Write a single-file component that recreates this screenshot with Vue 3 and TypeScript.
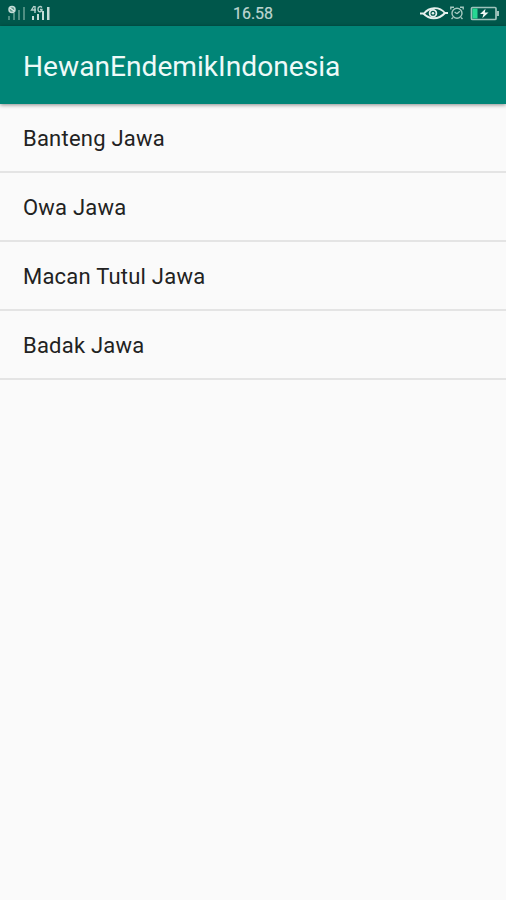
<script setup lang="ts">
const title: string = 'HewanEndemikIndonesia'
const animals: string[] = ['Banteng Jawa', 'Owa Jawa', 'Macan Tutul Jawa', 'Badak Jawa']
</script>

<template>
  <div class="screen">
    <div class="status">
      <svg class="signals" width="44" height="16" viewBox="0 0 44 16">
        <g fill="#4f8f82">
          <rect x="0" y="11" width="2" height="4" />
          <rect x="5" y="8" width="2" height="7" />
          <rect x="10" y="5" width="2" height="10" />
          <rect x="15" y="2" width="2" height="13" />
        </g>
        <circle cx="4" cy="4.5" r="3" fill="#5c988c" stroke="#c5dcd7" stroke-width="1.5" />
        <path d="M2 3 L6 6" stroke="#e3efec" stroke-width="1.2" />
        <g fill="#c5dcd7">
          <rect x="24" y="11" width="2" height="4" />
          <rect x="29" y="9" width="2" height="6" />
          <rect x="34" y="6" width="2" height="9" />
          <rect x="39" y="2" width="2.5" height="13" />
        </g>
        <path d="M26 1 L23.5 5 H28 M27 1 V8 M34 2.5 C32 .5 29.8 2 30 4.5 C30 8 34 7 34 4.5 H32" fill="none" stroke="#b4d1cb" stroke-width="1.4" />
      </svg>
      <span class="clock">16.58</span>
      <svg class="indicators" width="80" height="18" viewBox="0 0 80 18">
        <path d="M0 9.5 H4 C9 3 19 2 25 9 H28" fill="none" stroke="#e5f0ed" stroke-width="1.9" />
        <path d="M3.5 9.5 C9 15.5 18 16.5 25 9" fill="none" stroke="#e5f0ed" stroke-width="2" />
        <circle cx="13" cy="9.3" r="3.4" fill="none" stroke="#e5f0ed" stroke-width="1.7" />
        <circle cx="13" cy="9.3" r="1.3" fill="#e5f0ed" />
        <g fill="none" stroke="#a5c9c1" stroke-width="1.4">
          <circle cx="37" cy="9.3" r="5" />
          <path d="M30.8 5.5 V3.2 H34 M40 3.2 H43.2 V5.5 M33 13.5 L31.5 15 M41 13.5 L42.5 15 M37 9.7 L39.8 7.2 M37 9.7 L34.6 8" />
        </g>
        <rect x="51.5" y="3.5" width="24.5" height="12" rx="1" fill="none" stroke="#9fc3bc" stroke-width="1.7" />
        <rect x="76.5" y="7" width="2.5" height="5" fill="#9fc3bc" />
        <rect x="52.5" y="4.5" width="5" height="10" fill="#26d792" />
        <path d="M65.5 4.7 L60 10 H63.5 L62.3 14.2 L68.5 8.5 H64.8 Z" fill="#f0f7f5" />
      </svg>
    </div>
    <header class="appbar"><h1>{{ title }}</h1></header>
    <ul class="list">
      <li v-for="animal in animals" :key="animal"><span>{{ animal }}</span></li>
    </ul>
  </div>
</template>

<style>
body {
  margin: 0;
}
</style>

<style scoped>
.screen {
  height: 900px;
  background: #fafafa;
  font-family: Roboto, "Liberation Sans", sans-serif;
  overflow: hidden;
}
.status {
  height: 26px;
  box-sizing: border-box;
  padding: 0 6px 0 8px;
  display: grid;
  grid-template-columns: 1fr auto 1fr;
  align-items: center;
  background: #00574b;
}
.clock {
  font-size: 16px;
  line-height: 24px;
  padding-top: 2px;
  margin-right: 2px;
  color: #bdd5d0;
  -webkit-text-stroke: 0.2px #bdd5d0;
}
.indicators {
  justify-self: end;
}
.appbar {
  position: relative;
  height: 78px;
  display: flex;
  align-items: center;
  padding: 4px 23px 0;
  box-sizing: border-box;
  background: #008577;
  box-shadow: 0 1px 4px rgba(0, 0, 0, 0.45);
}
h1 {
  margin: 0;
  font-size: 28.15px;
  line-height: 36px;
  font-weight: 400;
  color: #eefaf8;
}
.list {
  margin: 0;
  padding: 0;
  list-style: none;
}
li {
  height: 69px;
  box-sizing: border-box;
  padding: 1px 23px 0;
  display: flex;
  align-items: center;
  border-bottom: 2px solid #e4e4e4;
  font-size: 22px;
  letter-spacing: 0.22px;
  color: #222;
}
</style>
